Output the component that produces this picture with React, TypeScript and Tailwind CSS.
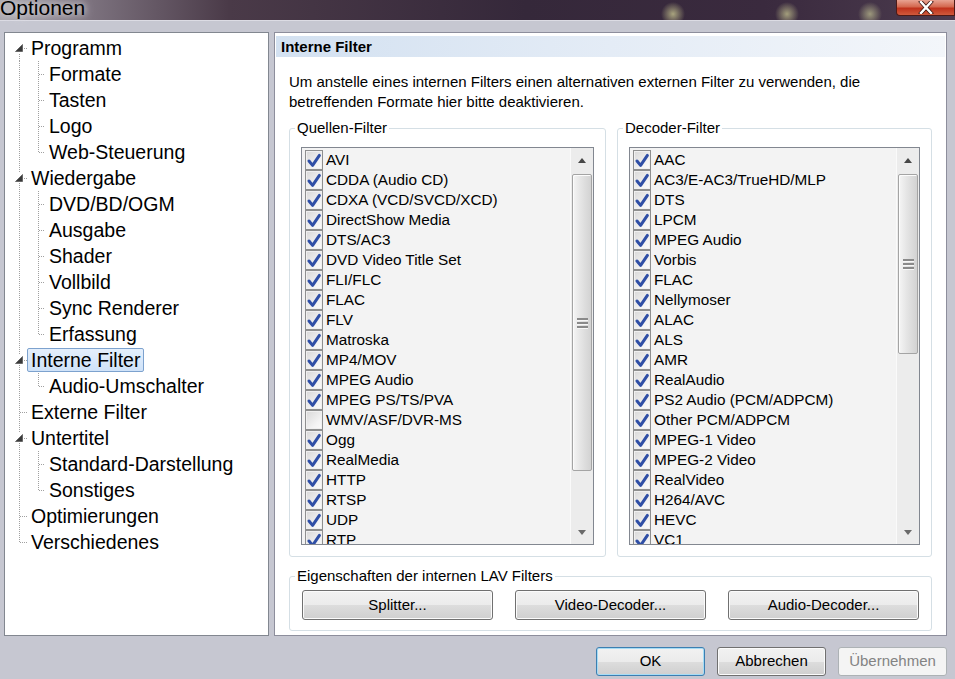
import React from "react";

type TreeItem = {
  label: string;
  level: 0 | 1;
  expand?: boolean;
  lastChild?: boolean;
  selected?: boolean;
};

const tree: TreeItem[] = [
  { label: "Programm", level: 0, expand: true },
  { label: "Formate", level: 1 },
  { label: "Tasten", level: 1 },
  { label: "Logo", level: 1 },
  { label: "Web-Steuerung", level: 1, lastChild: true },
  { label: "Wiedergabe", level: 0, expand: true },
  { label: "DVD/BD/OGM", level: 1 },
  { label: "Ausgabe", level: 1 },
  { label: "Shader", level: 1 },
  { label: "Vollbild", level: 1 },
  { label: "Sync Renderer", level: 1 },
  { label: "Erfassung", level: 1, lastChild: true },
  { label: "Interne Filter", level: 0, expand: true, selected: true },
  { label: "Audio-Umschalter", level: 1, lastChild: true },
  { label: "Externe Filter", level: 0 },
  { label: "Untertitel", level: 0, expand: true },
  { label: "Standard-Darstellung", level: 1 },
  { label: "Sonstiges", level: 1, lastChild: true },
  { label: "Optimierungen", level: 0 },
  { label: "Verschiedenes", level: 0 },
];

const sourceFilters: [string, boolean][] = [
  ["AVI", true],
  ["CDDA (Audio CD)", true],
  ["CDXA (VCD/SVCD/XCD)", true],
  ["DirectShow Media", true],
  ["DTS/AC3", true],
  ["DVD Video Title Set", true],
  ["FLI/FLC", true],
  ["FLAC", true],
  ["FLV", true],
  ["Matroska", true],
  ["MP4/MOV", true],
  ["MPEG Audio", true],
  ["MPEG PS/TS/PVA", true],
  ["WMV/ASF/DVR-MS", false],
  ["Ogg", true],
  ["RealMedia", true],
  ["HTTP", true],
  ["RTSP", true],
  ["UDP", true],
  ["RTP", true],
];

const decoderFilters: [string, boolean][] = [
  ["AAC", true],
  ["AC3/E-AC3/TrueHD/MLP", true],
  ["DTS", true],
  ["LPCM", true],
  ["MPEG Audio", true],
  ["Vorbis", true],
  ["FLAC", true],
  ["Nellymoser", true],
  ["ALAC", true],
  ["ALS", true],
  ["AMR", true],
  ["RealAudio", true],
  ["PS2 Audio (PCM/ADPCM)", true],
  ["Other PCM/ADPCM", true],
  ["MPEG-1 Video", true],
  ["MPEG-2 Video", true],
  ["RealVideo", true],
  ["H264/AVC", true],
  ["HEVC", true],
  ["VC1", true],
];

const dot = { stroke: "#a0a0a0", strokeWidth: 1, strokeDasharray: "1 1" };

function Connector({ item, index, last }: { item: TreeItem; index: number; last: boolean }) {
  if (item.level === 0) {
    return (
      <svg width="22" height="26" className="shrink-0" shapeRendering="crispEdges">
        <line x1="14.5" y1={index === 0 ? 13 : 0} x2="14.5" y2={last ? 14 : 26} {...dot} />
        <line x1="15" y1="13.5" x2="22" y2="13.5" {...dot} />
        {item.expand && (
          <>
            <rect x="9" y="8" width="10" height="10" fill="#ffffff" />
            <polygon points="17.5,9.5 17.5,16.5 10.5,16.5" fill="#3a3a3a" stroke="#5a5a5a" strokeWidth="0.8" shapeRendering="auto" />
          </>
        )}
      </svg>
    );
  }
  return (
    <svg width="40" height="26" className="shrink-0" shapeRendering="crispEdges">
      <line x1="14.5" y1="0" x2="14.5" y2="26" {...dot} />
      <line x1="33.5" y1="0" x2="33.5" y2={item.lastChild ? 14 : 26} {...dot} />
      <line x1="34" y1="13.5" x2="41" y2="13.5" {...dot} />
    </svg>
  );
}

function TreePanel() {
  return (
    <div className="h-[604px] w-[265px] shrink-0 border border-[#828790] bg-white pt-[2px] text-[19.5px] text-black">
      {tree.map((item, i) => (
        <div key={item.label} className="flex h-[26px] items-center">
          <Connector item={item} index={i} last={i === tree.length - 1} />
          <span
            className={
              item.selected
                ? "rounded-[2px] border border-[#7da2ce] bg-[linear-gradient(#e4effc,#cfe2f8)] px-[3px] leading-[22px]"
                : "border border-transparent px-[3px] leading-[22px]"
            }
          >
            {item.label}
          </span>
        </div>
      ))}
    </div>
  );
}

function CheckItem({ label, checked }: { label: string; checked: boolean }) {
  return (
    <div className="flex h-[20px] shrink-0 items-center">
      <div className="ml-[3px] flex h-[20px] w-[18px] shrink-0 items-center justify-center border border-[#8e8f8f] bg-[linear-gradient(135deg,#d8d8d8,#f4f4f4_70%,#fbfbfb)] shadow-[inset_0_0_0_1px_#f0f0f0]">
        {checked && (
          <svg width="16" height="18" viewBox="0 0 16 18">
            <path d="M3 10 L6.6 14.4 L13.4 4.4" fill="none" stroke="#2f4fa6" strokeWidth="3" strokeLinejoin="round" strokeLinecap="round" />
          </svg>
        )}
      </div>
      <span className="ml-[3px] whitespace-nowrap text-[15.3px] leading-[20px] text-black">{label}</span>
    </div>
  );
}

function ScrollBar({ thumb }: { thumb: string }) {
  return (
    <div className="flex h-full w-[23px] shrink-0 flex-col border-l border-[#fafafa] bg-[#ececec]">
      <div className="flex h-[24px] items-center justify-center">
        <svg width="8" height="5">
          <polygon points="0,5 4,0 8,5" fill="#474747" />
        </svg>
      </div>
      <div className="flex-1 px-[1px]">
        <div
          className={
            thumb +
            " flex items-center justify-center rounded-[2px] border border-[#a4a4a4] bg-[linear-gradient(to_right,#f5f5f5,#e4e4e4_45%,#d2d2d2)] shadow-[inset_1px_1px_0_#fcfcfc]"
          }
        >
          <div className="flex flex-col gap-[2px]">
            <div className="h-[2px] w-[11px] bg-[#8a8a8a] shadow-[0_1px_0_#f7f7f7]" />
            <div className="h-[2px] w-[11px] bg-[#8a8a8a] shadow-[0_1px_0_#f7f7f7]" />
            <div className="h-[2px] w-[11px] bg-[#8a8a8a] shadow-[0_1px_0_#f7f7f7]" />
          </div>
        </div>
      </div>
      <div className="flex h-[24px] items-center justify-center">
        <svg width="8" height="5">
          <polygon points="0,0 8,0 4,5" fill="#6a6a6a" />
        </svg>
      </div>
    </div>
  );
}

function FilterGroup({
  title,
  items,
  width,
  thumb,
}: {
  title: string;
  items: [string, boolean][];
  width: string;
  thumb: string;
}) {
  return (
    <fieldset className={width + " rounded-[3px] border border-[#d5dfe5] px-[11px] pb-[11px]"}>
      <legend className="-ml-[6px] px-[2px] text-[15px] leading-[18px] text-black">{title}</legend>
      <div className="mt-[10px] flex h-[398px] border border-[#828790] bg-[#f3f3f3]">
        <div className="flex flex-1 flex-col overflow-hidden pt-[2px]">
          {items.map(([label, checked]) => (
            <CheckItem key={label} label={label} checked={checked} />
          ))}
        </div>
        <ScrollBar thumb={thumb} />
      </div>
    </fieldset>
  );
}

const btn =
  "h-[30px] w-[191px] rounded-[3px] border border-[#707070] bg-[linear-gradient(#f2f2f2_0%,#ebebeb_50%,#dddddd_50%,#cfcfcf_100%)] text-[15px] text-black shadow-[inset_0_0_0_1px_#fbfbfb]";

export default function App() {
  return (
    <div className="flex h-[679px] w-[955px] flex-col overflow-hidden bg-[#c6c7d1] font-['Liberation_Sans',Arial,sans-serif]">
      {/* title bar */}
      <div className="flex h-[21px] shrink-0 items-start justify-between border-b border-[#dcdce4] bg-[radial-gradient(circle_at_673px_14px,#a9a47e_0,transparent_12px),radial-gradient(circle_at_787px_14px,#a39e7c_0,transparent_12px),radial-gradient(circle_at_870px_14px,#9c987c_0,transparent_12px),linear-gradient(to_right,#a9a6ad_0%,#7e7480_9%,#4a3a48_24%,#35283a_55%,#3a2a3e_80%,#4b3b4e_100%)]">
        <span className="-mt-[3px] text-[21px] leading-[22px] text-black [text-shadow:0_0_6px_#d8d8dc,0_0_10px_#d8d8dc]">Optionen</span>
        <div className="flex h-[16px] w-[59px] items-center justify-center rounded-bl-[4px] border border-t-0 border-[#4d1a16] bg-[linear-gradient(#e8a392_0%,#d4684f_45%,#c0321c_55%,#cf5a3c_100%)]">
          <svg width="16" height="13" viewBox="0 0 16 13">
            <path d="M3 1 L13 12 M13 1 L3 12" stroke="#3a1410" strokeWidth="4" strokeLinecap="square" />
            <path d="M3 1 L13 12 M13 1 L3 12" stroke="#ffffff" strokeWidth="2.4" strokeLinecap="square" />
          </svg>
        </div>
      </div>

      {/* body */}
      <div className="flex gap-[5px] pl-[4px] pt-[11px]">
        <TreePanel />
        <div className="flex h-[604px] w-[673px] shrink-0 flex-col border border-[#8d8e9c] bg-white">
          <div className="mx-[1px] mt-[3px] flex h-[21px] items-center bg-[linear-gradient(to_right,#d3e1f1,#e4ecf6_50%,#f3f6fa)] pl-[5px] pt-[1px] text-[15px] font-bold text-black">
            Interne Filter
          </div>
          <p className="mt-[15px] px-[14px] text-[15px] leading-[20px] text-black">
            Um anstelle eines internen Filters einen alternativen externen Filter zu verwenden, die
            <br />
            betreffenden Formate hier bitte deaktivieren.
          </p>
          <div className="mt-[7px] flex gap-[11px] px-[14px]">
            <FilterGroup title="Quellen-Filter" items={sourceFilters} width="w-[317px]" thumb="mt-[2px] h-[297px]" />
            <FilterGroup title="Decoder-Filter" items={decoderFilters} width="w-[315px]" thumb="mt-[2px] h-[180px]" />
          </div>
          <fieldset className="mx-[14px] mt-[10px] w-[643px] rounded-[3px] border border-[#d5dfe5] px-[12px] pb-[10px]">
            <legend className="-ml-[7px] px-[2px] text-[15px] leading-[18px] text-black">
              Eigenschaften der internen LAV Filters
            </legend>
            <div className="mt-[5px] flex gap-[22px]">
              <button className={btn}>Splitter...</button>
              <button className={btn}>Video-Decoder...</button>
              <button className={btn}>Audio-Decoder...</button>
            </div>
          </fieldset>
        </div>
      </div>

      {/* dialog buttons */}
      <div className="mt-[11px] flex justify-end gap-[12px] pr-[8px]">
        <button className="h-[29px] w-[109px] rounded-[3px] border border-[#3c7fb1] bg-[linear-gradient(#f2f2f2_0%,#ebebeb_50%,#dddddd_50%,#cfcfcf_100%)] text-[15px] text-black shadow-[inset_0_0_0_1px_#a6dcf5]">
          OK
        </button>
        <button className="h-[29px] w-[109px] rounded-[3px] border border-[#707070] bg-[linear-gradient(#f2f2f2_0%,#ebebeb_50%,#dddddd_50%,#cfcfcf_100%)] text-[15px] text-black shadow-[inset_0_0_0_1px_#fbfbfb]">
          Abbrechen
        </button>
        <button className="h-[29px] w-[109px] rounded-[3px] border border-[#adb2b5] bg-[#f4f4f4] text-[15px] text-[#838383]">
          Übernehmen
        </button>
      </div>
    </div>
  );
}
